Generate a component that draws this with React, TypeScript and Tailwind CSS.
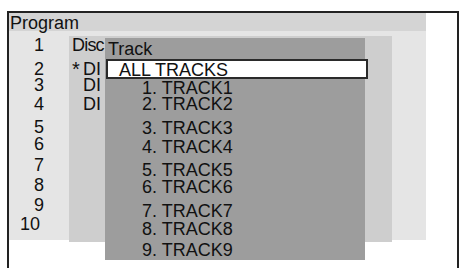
import React from 'react';

// row heights shared by the number column and the disc column
const rowHeights = ['h-[24px]', 'h-[16px]', 'h-[19px]', 'h-[23px]', 'h-[17px]', 'h-[21px]', 'h-[20px]', 'h-[20px]', 'h-[19px]', 'h-[17px]'];

const tracks = [
  { label: '1. TRACK1', h: 'h-[16px]' },
  { label: '2. TRACK2', h: 'h-[24px]' },
  { label: '3. TRACK3', h: 'h-[19px]' },
  { label: '4. TRACK4', h: 'h-[23px]' },
  { label: '5. TRACK5', h: 'h-[17px]' },
  { label: '6. TRACK6', h: 'h-[24px]' },
  { label: '7. TRACK7', h: 'h-[18px]' },
  { label: '8. TRACK8', h: 'h-[21px]' },
  { label: '9. TRACK9', h: 'h-[18px]' },
];

const discs: React.ReactNode[] = [
  <span className="tracking-[-0.8px]">Disc</span>,
  <span className="flex"><span className="w-[11px] text-[20px]">*</span>DI</span>,
  <span className="pl-[11px]">DI</span>,
  <span className="pl-[11px]">DI</span>,
];

export default function App() {
  return (
    <div
      className="w-[462px] h-[268px] bg-white overflow-hidden pl-[7px] pt-[11px] text-[18px] leading-[18px] text-[#111]"
      style={{ fontFamily: '"Liberation Sans", Arial, sans-serif' }}
    >
      <div className="relative w-[452px] h-[257px] border-l-2 border-t-2 border-r-2 border-[#222]">
        {/* Header */}
        <div className="w-[417px] h-[18px] bg-[#d4d4d4] pl-[1px] pt-[1px]">Program</div>

        {/* Program list */}
        <div className="w-[417px] h-[209px] bg-[#e5e5e5] pt-[5px]">
          {rowHeights.map((h, i) => (
            <div key={i} className={`${h} w-[35px] text-right ${i === 9 ? 'pr-[4px]' : ''}`}>
              {i + 1}
            </div>
          ))}
        </div>

        {/* Disc column */}
        <div className="absolute left-[60px] top-[23px] w-[323px] h-[206px] bg-[#cecece] pl-[3px]">
          {discs.map((d, i) => (
            <div key={i} className={rowHeights[i]}>
              {d}
            </div>
          ))}
        </div>

        {/* Track popup */}
        <div className="absolute left-[96px] top-[25px] w-[260px] h-[222px] bg-[#9d9d9d] pt-[2px] flex flex-col">
          <div className="h-[19px] pl-[3px]">Track</div>
          <div className="ml-[1px] w-[262px] h-[20px] bg-white border-2 border-[#2a2a2a] pl-[11px]">ALL TRACKS</div>
          {tracks.map((t) => (
            <div key={t.label} className={`${t.h} pl-[37px]`}>
              {t.label}
            </div>
          ))}
        </div>
      </div>
    </div>
  );
}
